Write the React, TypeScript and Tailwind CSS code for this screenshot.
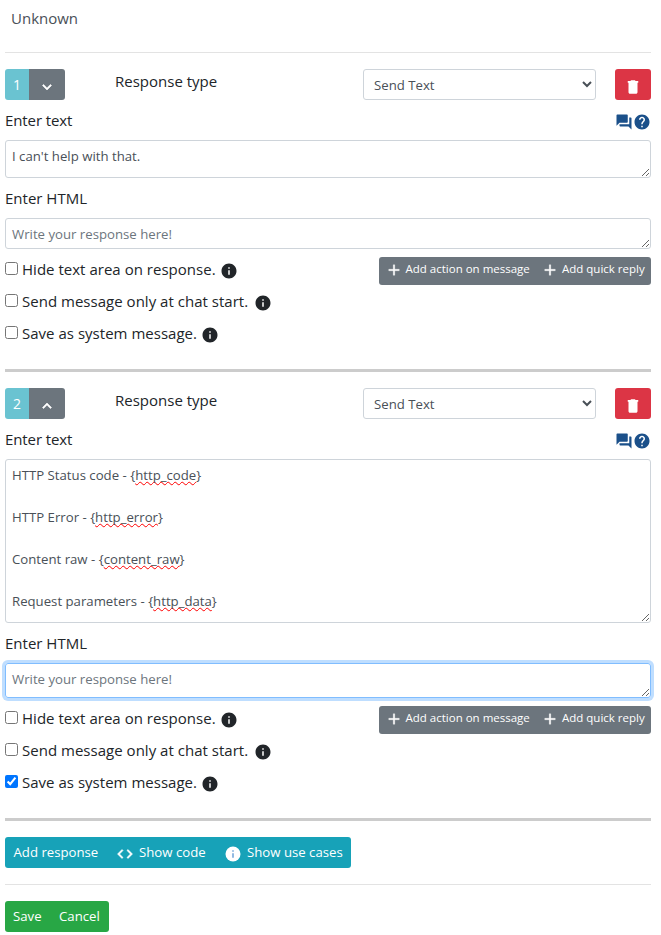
import type { ReactNode } from "react";
import { MdForum, MdHelp, MdInfo } from "react-icons/md";

const paths = {
  trash: "M6 19c0 1.1.9 2 2 2h8c1.1 0 2-.9 2-2V6H6v13zM19 4h-3.5l-1-1h-5l-1 1H5v2.4h14V4z",
  down: "M7.4 8.6 12 13.2l4.6-4.6L18 10l-6 6-6-6z",
  up: "M7.4 15.4 12 10.8l4.6 4.6L18 14l-6-6-6 6z",
  plus: "M19 13h-6v6h-2v-6H5v-2h6V5h2v6h6z",
  code: "M9.4 16.6 4.8 12l4.6-4.6L8 6l-6 6 6 6zM14.6 16.6l4.6-4.6-4.6-4.6L16 6l6 6-6 6z",
};

function Glyph({ name, className = "" }: { name: keyof typeof paths; className?: string }) {
  return (
    <svg viewBox="0 0 24 24" fill="currentColor" className={`size-[18px] shrink-0 ${className}`}>
      <path d={paths[name]} />
    </svg>
  );
}

function Check({ label, checked = false, width }: { label: string; checked?: boolean; width: string }) {
  return (
    <label className="flex h-8 items-start">
      <input type="checkbox" defaultChecked={checked} className="mt-2 size-[13px] shrink-0" />
      <span className={`ml-[4px] mt-[3px] whitespace-nowrap leading-6 tracking-[0.02px] ${width}`}>{label}</span>
      <MdInfo className="ml-[4px] mt-2 size-[18px] shrink-0" />
    </label>
  );
}

function Resizable({ children, className }: { children: ReactNode; className: string }) {
  return (
    <div
      className={`resize-y overflow-hidden rounded-[3px] border px-[6px] pt-[5px] text-[13.2px] leading-[21px] ${className}`}
    >
      {children}
    </div>
  );
}

function VariableLine({ label, name }: { label: string; name: string }) {
  return (
    <div className="mb-[21px] flex whitespace-pre">
      <span>{label} - {"{"}</span>
      <span className="underline decoration-[#ff0000] decoration-wavy decoration-[1px] underline-offset-[1px] [text-decoration-skip-ink:none]">
        {name}
      </span>
      <span>{"}"}</span>
    </div>
  );
}

interface ResponseProps {
  index: number;
  open?: boolean;
  text: ReactNode;
  textClass: string;
  htmlClass: string;
  system?: boolean;
}

function Response({ index, open = false, text, textClass, htmlClass, system = false }: ResponseProps) {
  return (
    <section>
      <div className="flex h-[31px]">
        <div className="flex w-[60px] overflow-hidden rounded-[3px] text-[14px] text-white">
          <span className="flex w-6 items-center justify-center bg-[#6ac3d1]">{index}</span>
          <button className="flex w-9 items-center justify-center bg-[#6c757d] pt-[4px]">
            <Glyph name={open ? "up" : "down"} className="stroke-current stroke-[0.8]" />
          </button>
        </div>
        <span className="ml-[50px] w-[248px] leading-[25px]">Response type</span>
        <select className="h-[31px] w-[233px] rounded-[3px] border border-[#ced4da] bg-white pl-[6px] text-[13.2px] text-[#495057]">
          <option>Send Text</option>
        </select>
        <button className="ml-auto flex w-9 items-center justify-center rounded-[3px] bg-[#dc3545] pt-[4px] text-white">
          <Glyph name="trash" />
        </button>
      </div>

      <div className="flex h-10 items-center justify-between">
        <span className="pt-px tracking-[-0.1px]">Enter text</span>
        <span className="flex pt-[3px] text-[#1b508a]">
          <MdForum className="size-[18px]" />
          <MdHelp className="size-[18px]" />
        </span>
      </div>
      <Resizable className={`border-[#ced4da] text-[#495057] ${textClass}`}>{text}</Resizable>

      <div className="flex h-10 items-center pt-px">Enter HTML</div>
      <Resizable className={`text-[#6c757d] ${htmlClass}`}>Write your response here!</Resizable>

      <div className="mt-[5px] flex items-start justify-between">
        <div>
          <Check label="Hide text area on response." width="w-[194px]" />
          <Check label="Send message only at chat start." width="w-[228px]" />
          <Check label="Save as system message." checked={system} width="w-[175px]" />
        </div>
        <div className="mt-[3px] flex h-7 w-[272px] items-start rounded-[3px] bg-[#6c757d] text-[11.5px] leading-6 text-white">
          <button className="ml-[5.5px] flex h-6 w-[156.5px] items-center whitespace-nowrap">
            <Glyph name="plus" className="mr-[3px] mt-[2px] stroke-current stroke-[0.4]" />
            Add action on message
          </button>
          <button className="flex h-6 items-center whitespace-nowrap">
            <Glyph name="plus" className="mr-[3px] mt-[2px] stroke-current stroke-[0.4]" />
            Add quick reply
          </button>
        </div>
      </div>
      <hr className="mb-4 mt-[19px] border-0 border-t-[3px] border-[#cccccc]" />
    </section>
  );
}

export default function App() {
  return (
    <main className="h-[935px] w-[661px] bg-white pl-[5px] pr-[10px] font-['Segoe_UI','Open_Sans','Noto_Sans',sans-serif] text-[15px] text-[#212529]">
      <header className="h-[52px] pl-[6px] pt-[6px] leading-6 text-[#495057]">Unknown</header>
      <hr className="mb-4 border-0 border-t border-[#e3e3e3]" />

      <Response index={1} text="I can't help with that." textClass="h-[38px]" htmlClass="h-[31px] border-[#ced4da]" />
      <Response
        index={2}
        open
        system
        textClass="h-[164px]"
        htmlClass="h-[35px] border-[#80bdff] shadow-[0_0_0_3px_#bfdeff]"
        text={
          <>
            <VariableLine label="HTTP Status code" name="http_code" />
            <VariableLine label="HTTP Error" name="http_error" />
            <VariableLine label="Content raw" name="content_raw" />
            <VariableLine label="Request parameters" name="http_data" />
          </>
        }
      />

      <div className="flex h-[31px] w-[346px] items-center rounded-[3px] bg-[#17a2b8] pl-[8.5px] pt-px text-[13.2px] text-white">
        <button className="w-[102.5px] whitespace-nowrap text-left">Add response</button>
        <button className="flex w-[108px] items-center whitespace-nowrap">
          <Glyph name="code" className="mr-[5px] mt-[2px] stroke-current stroke-[0.7]" />
          Show code
        </button>
        <button className="flex items-center whitespace-nowrap">
          <svg viewBox="0 0 24 24" className="mr-[5px] mt-[2px] size-[18px] shrink-0">
            <circle cx="12" cy="12" r="10" fill="#ffffff" />
            <path d="M11 7h2v2h-2zM11 11h2v6h-2z" fill="#6fa3d8" />
          </svg>
          Show use cases
        </button>
      </div>
      <hr className="my-4 border-0 border-t border-[#e3e3e3]" />
      <div className="flex h-[31px] w-[104px] items-center rounded-[3px] bg-[#28a745] pl-[8px] pt-px text-[13.2px] text-white">
        <button className="w-[46px] text-left">Save</button>
        <button>Cancel</button>
      </div>
    </main>
  );
}
